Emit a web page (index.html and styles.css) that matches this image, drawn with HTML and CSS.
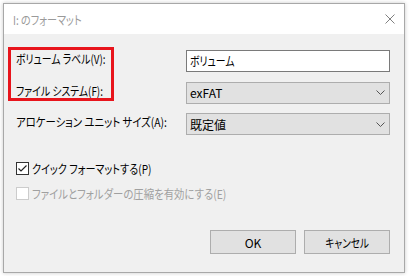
FILE: index.html
```html
<!DOCTYPE html>
<html lang="ja">
<head>
<meta charset="utf-8">
<title>I: のフォーマット</title>
<link rel="stylesheet" href="styles.css">
</head>
<body>
<div class="window">
  <div class="titlebar">
    <span class="title"><span class="nar">I: のフォーマット</span></span>
    <svg class="close" width="10" height="10" viewBox="0 0 10 10"><path d="M0.5 0.5 L9.5 9.5 M9.5 0.5 L0.5 9.5" stroke="#808080" stroke-width="1" fill="none"/></svg>
  </div>
  <div class="content">
    <div class="form">
      <label class="lbl"><span class="nar n1">ボリューム ラベル(V):</span></label>
      <div class="textbox"><span class="nar n1">ボリューム</span></div>
      <label class="lbl"><span class="nar n1">ファイル システム(F):</span></label>
      <div class="select"><span>exFAT</span><svg class="chev" width="9" height="5" viewBox="0 0 9 5"><path d="M0.5 0.5 L4.5 4.5 L8.5 0.5" stroke="#555" stroke-width="1" fill="none"/></svg></div>
      <label class="lbl"><span class="nar n3">アロケーション ユニット サイズ(A):</span></label>
      <div class="select"><span>既定値</span><svg class="chev" width="9" height="5" viewBox="0 0 9 5"><path d="M0.5 0.5 L4.5 4.5 L8.5 0.5" stroke="#555" stroke-width="1" fill="none"/></svg></div>
    </div>
    <div class="checks">
      <div class="check">
        <span class="box"><svg width="11" height="11" viewBox="0 0 11 11"><path d="M1.5 5.5 L4 8 L9.5 2.5" stroke="#222" stroke-width="1.2" fill="none"/></svg></span>
        <span class="nar">クイック フォーマットする(P)</span>
      </div>
      <div class="check disabled">
        <span class="box"></span>
        <span class="nar n3">ファイルとフォルダーの圧縮を有効にする(E)</span>
      </div>
    </div>
    <div class="buttons">
      <div class="btn">OK</div>
      <div class="btn"><span class="nar mid">キャンセル</span></div>
    </div>
  </div>
  <div class="highlight"></div>
</div>
</body>
</html>
```
FILE: styles.css
```css
html, body {
  margin: 0;
  padding: 0;
  background: #ffffff;
}
body {
  padding: 3px;
  font-family: "Noto Sans CJK JP", "Noto Sans", sans-serif;
  font-size: 12px;
  font-feature-settings: "palt";
  color: #000;
}
.nar {
  display: inline-block;
  white-space: nowrap;
  transform: scaleX(0.84);
  transform-origin: left center;
}
.nar.n1 {
  transform: scaleX(0.82);
}
.nar.n3 {
  transform: scaleX(0.865);
}
.nar.mid {
  transform: scaleX(0.8);
  transform-origin: center center;
}
.window {
  position: relative;
  width: 400px;
  height: 268px;
  border: 1px solid #a8a8a8;
  background: #f0f0f0;
  box-shadow: 0 0 4px rgba(0,0,0,0.22);
  display: flex;
  flex-direction: column;
}
.titlebar {
  height: 30px;
  background: #ffffff;
  display: flex;
  align-items: center;
  justify-content: space-between;
  padding: 0 9px 0 9px;
}
.title {
  color: #9a9a9a;
  font-size: 12px;
  padding-top: 1px;
}
.close {
  display: block;
}
.content {
  flex: 1;
  padding: 16px 14px 0 12px;
  display: flex;
  flex-direction: column;
}
.form {
  display: grid;
  grid-template-columns: 170px 204px;
  grid-auto-rows: 22px;
  row-gap: 9.5px;
  align-items: center;
}
.lbl {
  line-height: 18px;
  padding-bottom: 4px;
  white-space: nowrap;
}
.textbox {
  box-sizing: border-box;
  height: 22px;
  border: 1px solid #7a7a7a;
  background: #fff;
  padding: 0 3px;
  line-height: 20px;
}
.select {
  box-sizing: border-box;
  height: 22px;
  border: 1px solid #adadad;
  background: #e1e1e1;
  padding: 0 4px 0 3px;
  display: flex;
  align-items: center;
  justify-content: space-between;
}
.chev {
  display: block;
}
.checks {
  margin-top: 27px;
  display: flex;
  flex-direction: column;
  gap: 12px;
}
.check {
  display: flex;
  align-items: center;
  gap: 3px;
  height: 13px;
}
.box {
  box-sizing: border-box;
  flex: none;
  width: 13px;
  height: 13px;
  border: 1px solid #333;
  background: #fff;
  display: flex;
  align-items: center;
  justify-content: center;
}
.box svg {
  display: block;
}
.disabled {
  color: #a0a0a0;
}
.disabled .box {
  border-color: #cccccc;
}
.buttons {
  margin-top: 30px;
  display: flex;
  justify-content: flex-end;
  gap: 8px;
}
.btn {
  box-sizing: border-box;
  width: 86px;
  height: 24px;
  border: 1px solid #adadad;
  background: #e1e1e1;
  display: flex;
  align-items: center;
  justify-content: center;
}
.highlight {
  position: absolute;
  left: 4px;
  top: 43px;
  width: 100px;
  height: 48px;
  border: 3px solid #e8141c;
}
```
